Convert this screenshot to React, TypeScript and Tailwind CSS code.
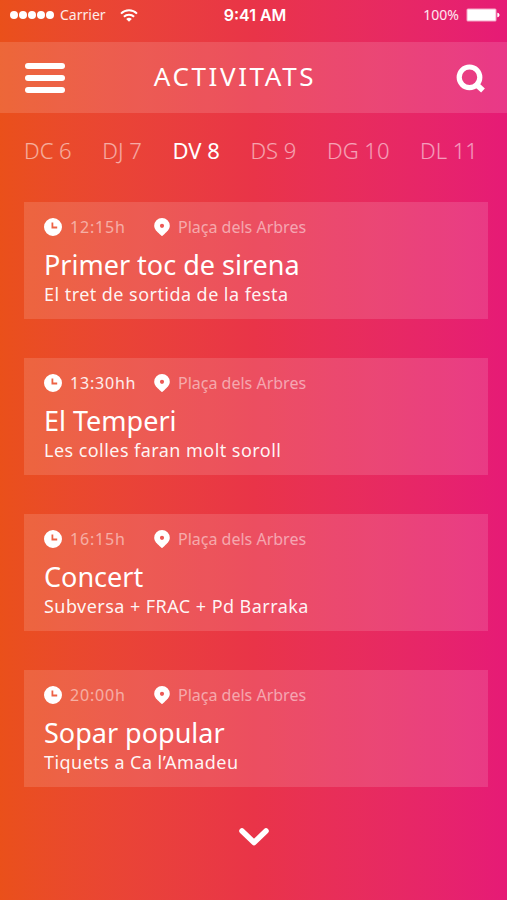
import { useState } from 'react';
import clsx from 'clsx';

interface Activity {
  time: string;
  place: string;
  title: string;
  description: string;
  highlighted?: boolean;
}

const days = ['DC 6', 'DJ 7', 'DV 8', 'DS 9', 'DG 10', 'DL 11'];

const activities: Activity[] = [
  {
    time: '12:15h',
    place: 'Plaça dels Arbres',
    title: 'Primer toc de sirena',
    description: 'El tret de sortida de la festa'
  },
  {
    time: '13:30hh',
    place: 'Plaça dels Arbres',
    title: 'El Temperi',
    description: 'Les colles faran molt soroll',
    highlighted: true
  },
  {
    time: '16:15h',
    place: 'Plaça dels Arbres',
    title: 'Concert',
    description: 'Subversa + FRAC + Pd Barraka'
  },
  {
    time: '20:00h',
    place: 'Plaça dels Arbres',
    title: 'Sopar popular',
    description: 'Tiquets a Ca l’Amadeu'
  }
];

function WifiIcon() {
  return (
    <svg viewBox="0 0 18 13" className="h-[13px] w-[18px]" fill="none" stroke="currentColor" strokeWidth="2" aria-hidden="true">
      <path d="M1 4.6a11.4 11.4 0 0 1 16 0" />
      <path d="M3.9 7.8a7.3 7.3 0 0 1 10.2 0" />
      <path d="M9 12.8 6.2 10a4 4 0 0 1 5.6 0z" fill="currentColor" stroke="none" />
    </svg>
  );
}

function BatteryIcon() {
  return (
    <svg viewBox="0 0 34 14" className="h-[14px] w-[34px]" aria-hidden="true">
      <rect x="0.5" y="0.5" width="30" height="13" rx="1.5" fill="#fff" fillOpacity="0.6" />
      <rect x="1.5" y="1.5" width="28" height="11" rx="0.5" fill="#fff" />
      <path d="M31.3 4.7c1.4.3 2.2 1.2 2.2 2.3s-.8 2-2.2 2.3z" fill="#fff" />
    </svg>
  );
}

function SearchIcon() {
  return (
    <svg viewBox="0 0 30 30" className="h-[30px] w-[30px]" fill="none" stroke="currentColor" aria-hidden="true">
      <circle cx="14.5" cy="14.3" r="10.3" strokeWidth="5.2" />
      <path d="m21 21.2 7 6.300" strokeWidth="5.600" />
    </svg>
  );
}

function ClockIcon() {
  return (
    <svg viewBox="0 0 18 18" className="h-[18px] w-[18px]" aria-hidden="true">
      <path
        fill="currentColor"
        fillRule="evenodd"
        d="M9 0a9 9 0 1 1 0 18A9 9 0 0 1 9 0zM7.5 4.6v5.8h5.7V8.6H9.3V4.6z"
      />
    </svg>
  );
}

function PinIcon() {
  return (
    <svg viewBox="0 0 16 18" className="h-[18px] w-4" aria-hidden="true">
      <path
        fill="currentColor"
        fillRule="evenodd"
        d="M8 0a7.8 7.8 0 0 1 7.8 7.8c0 3.6-3 6-5.3 8.2L8 18.2 5.5 16C3.2 13.8.2 11.4.2 7.8A7.8 7.8 0 0 1 8 0zM8 5.7a2.1 2.1 0 1 0 0 4.2 2.1 2.1 0 0 0 0-4.2z"
      />
    </svg>
  );
}

function StatusBar() {
  return (
    <div className="grid h-[42px] grid-cols-3 items-start pt-[5px] pr-[7px] pl-[10px] text-sm leading-5">
      <div className="flex items-center">
        <div className="flex gap-px">
          {[0, 1, 2, 3, 4].map((dot) => (
            <span key={dot} className="h-2 w-2 rounded-full bg-white" />
          ))}
        </div>
        <span className="ml-1.5 text-white/90">Carrier</span>
        <span className="ml-3.5">
          <WifiIcon />
        </span>
      </div>
      <span className="text-center font-['Inter',sans-serif] text-base leading-5 font-semibold">9:41 AM</span>
      <div className="flex items-center justify-end gap-[7px]">
        <span className="text-white/90">100%</span>
        <BatteryIcon />
      </div>
    </div>
  );
}

function ActivityCard({ activity }: { activity: Activity }) {
  return (
    <article className="bg-white/13 px-5 pt-[15px] pb-[11px]">
      <div className="flex h-5 items-center text-base leading-5 text-white/50">
        <span className="text-white">
          <ClockIcon />
        </span>
        <time className={clsx('ml-2 w-[84px] tracking-wider', activity.highlighted && 'text-white/90')}>
          {activity.time}
        </time>
        <span className="text-white">
          <PinIcon />
        </span>
        <span className="ml-2">{activity.place}</span>
      </div>
      <h2 className="mt-[13px] text-[27px] leading-[30px]">{activity.title}</h2>
      <p className="text-lg leading-7 tracking-wide text-white/95">{activity.description}</p>
    </article>
  );
}

export default function App() {
  const [selectedDay, setSelectedDay] = useState('DV 8');

  return (
    <div className="min-h-screen bg-linear-to-r from-[#ea501a] via-[#e93448] to-[#e61a76] font-['Noto_Sans',sans-serif] text-white">
      <StatusBar />

      <header className="grid h-[71px] grid-cols-[40px_1fr_40px] items-center bg-white/13 pr-[22px] pl-[25px]">
        <button type="button" aria-label="Menu" className="flex flex-col gap-[6px]">
          <span className="h-[6px] w-10 rounded-full bg-white" />
          <span className="h-[6px] w-10 rounded-full bg-white" />
          <span className="h-[6px] w-10 rounded-full bg-white" />
        </button>
        <h1 className="pr-10 pb-1 text-center text-[26px] leading-8 tracking-widest">ACTIVITATS</h1>
        <button type="button" aria-label="Search" className="justify-self-end">
          <SearchIcon />
        </button>
      </header>

      <nav className="flex justify-between pt-[21px] pr-[29px] pl-6 text-[22px] leading-8 font-light">
        {days.map((day) => (
          <button
            key={day}
            type="button"
            onClick={() => setSelectedDay(day)}
            className={clsx(day === selectedDay ? 'font-normal text-white' : 'text-white/55')}
          >
            {day}
          </button>
        ))}
      </nav>

      <main className="flex flex-col gap-[39px] pt-9 pr-[19px] pl-6">
        {activities.map((activity) => (
          <ActivityCard key={activity.title} activity={activity} />
        ))}
      </main>

      <div className="flex justify-center pt-10 pb-12">
        <button type="button" aria-label="Show more">
          <svg
            viewBox="0 0 32 20"
            className="h-5 w-8"
            fill="none"
            stroke="currentColor"
            strokeWidth="5.5"
            strokeLinecap="round"
            strokeLinejoin="round"
            aria-hidden="true"
          >
            <path d="m4 4 12 11.5L28 4" />
          </svg>
        </button>
      </div>
    </div>
  );
}
